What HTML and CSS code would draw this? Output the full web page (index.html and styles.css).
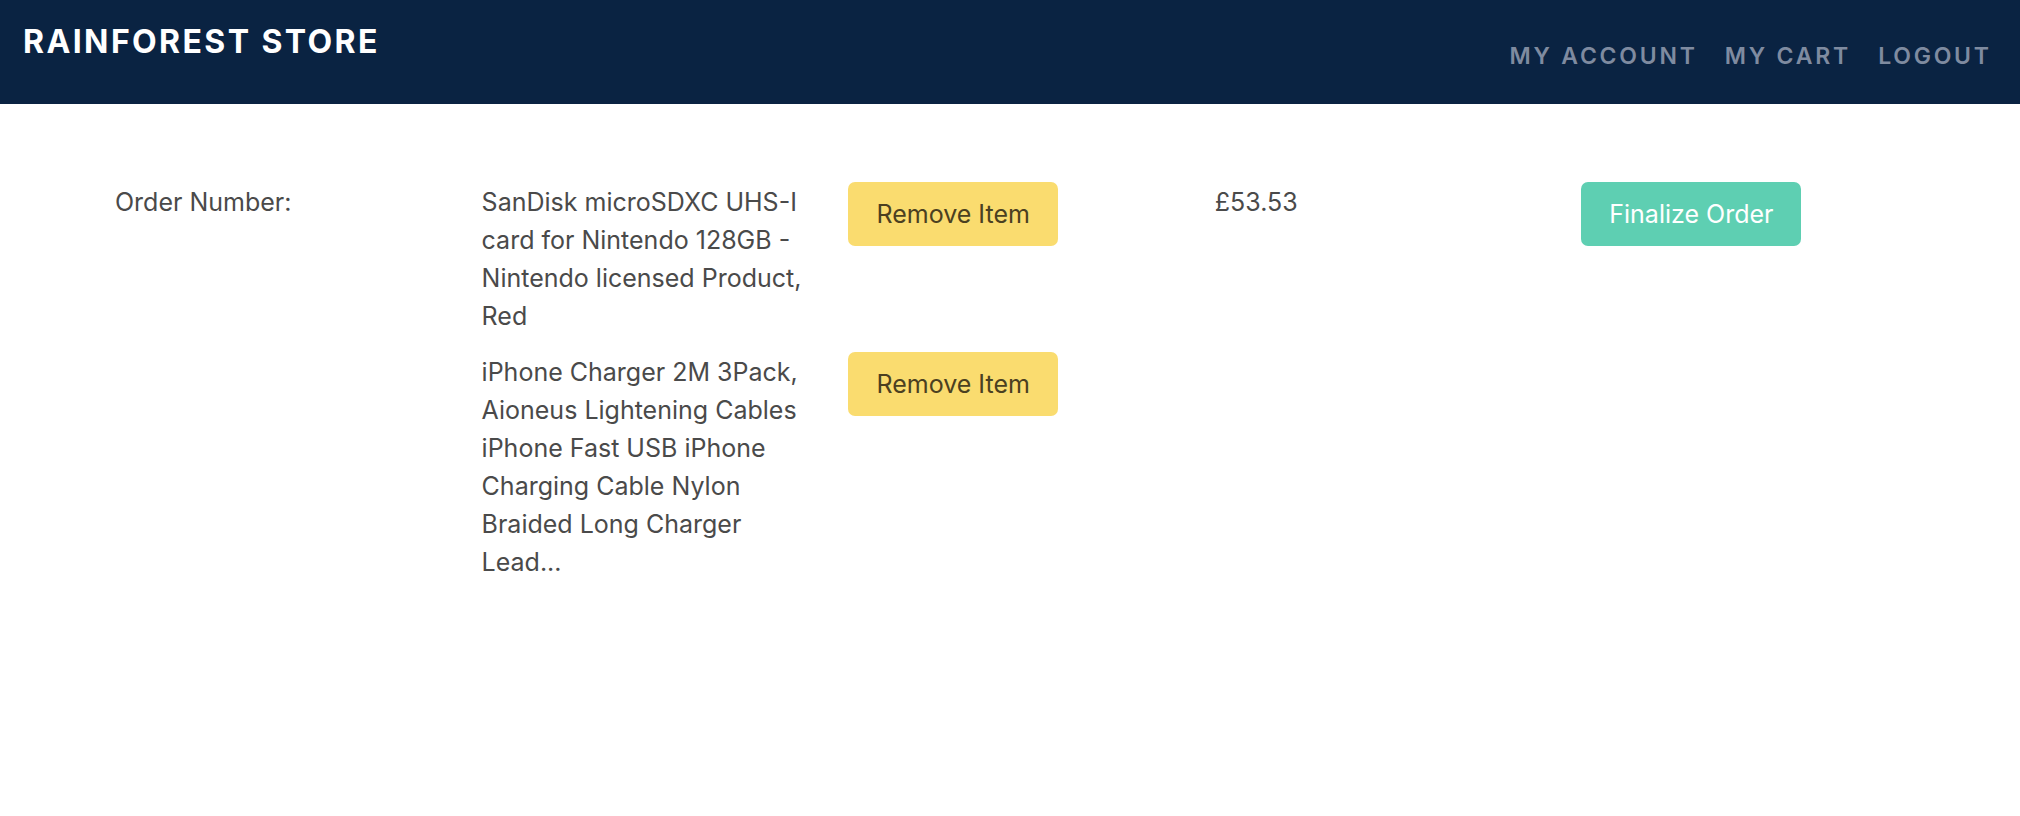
FILE: index.html
```html
<!DOCTYPE html>
<html lang="en">
<head>
<meta charset="utf-8">
<title>Rainforest Store - Cart</title>
<link rel="stylesheet" href="styles.css">
</head>
<body>
<header class="topbar">
  <div class="brand">RAINFOREST STORE</div>
  <nav class="nav">
    <a class="nav-link" href="#">MY ACCOUNT</a>
    <a class="nav-link" href="#">MY CART</a>
    <a class="nav-link" href="#">LOGOUT</a>
  </nav>
</header>
<main class="order">
  <div class="order-label">Order Number:</div>
  <div class="items">
    <div class="item">
      <div class="item-desc">SanDisk microSDXC UHS-I card for Nintendo 128GB - Nintendo licensed Product, Red</div>
      <div class="item-action"><button class="btn btn-remove">Remove Item</button></div>
    </div>
    <div class="item">
      <div class="item-desc">iPhone Charger 2M 3Pack, Aioneus Lightening Cables iPhone Fast USB iPhone Charging Cable Nylon Braided Long Charger Lead...</div>
      <div class="item-action"><button class="btn btn-remove">Remove Item</button></div>
    </div>
  </div>
  <div class="price">£53.53</div>
  <div class="actions">
    <button class="btn btn-finalize">Finalize Order</button>
  </div>
</main>
</body>
</html>
```
FILE: styles.css
```css
* { box-sizing: border-box; }
html, body { margin: 0; padding: 0; }
body {
  font-family: Inter, "Noto Sans", "Liberation Sans", sans-serif;
  color: #4a4a4a;
  background: #ffffff;
}
.topbar {
  height: 104px;
  background: #0a2342;
  display: flex;
  justify-content: space-between;
  align-items: flex-start;
  padding: 0 31px 0 23px;
}
.brand {
  margin-top: 22px;
  font-size: 32px;
  line-height: 40px;
  font-weight: 700;
  letter-spacing: 0.075em;
  color: #ffffff;
}
.nav {
  margin-top: 42px;
  display: flex;
  gap: 30px;
}
.nav-link {
  font-size: 23px;
  line-height: 28px;
  font-weight: 600;
  letter-spacing: 0.12em;
  margin-right: -0.12em;
  color: #7f8ba0;
  text-decoration: none;
}
.order {
  display: grid;
  grid-template-columns: 366.6px 733.2px 366.6px 366.6px;
  align-items: start;
  padding: 78px 0 0 115px;
  font-size: 25px;
  line-height: 38px;
}
.order-label { margin-top: 1px; }
.items {
  display: flex;
  flex-direction: column;
  gap: 17px;
}
.item {
  display: grid;
  grid-template-columns: 366.6px 366.6px;
  align-items: start;
}
.item-desc {
  padding-right: 22px;
  margin-top: 1px;
}
.price { margin-top: 1px; }
.btn {
  font-family: inherit;
  font-size: 25px;
  line-height: 30px;
  height: 64px;
  border: none;
  border-radius: 7px;
  padding: 0 27px;
  cursor: pointer;
}
.btn-remove {
  width: 210px;
  padding: 0;
  background: #fadc6f;
  color: #4b4021;
}
.btn-finalize {
  width: 220px;
  padding: 0;
  background: #5ecfb2;
  color: #ffffff;
}
```
